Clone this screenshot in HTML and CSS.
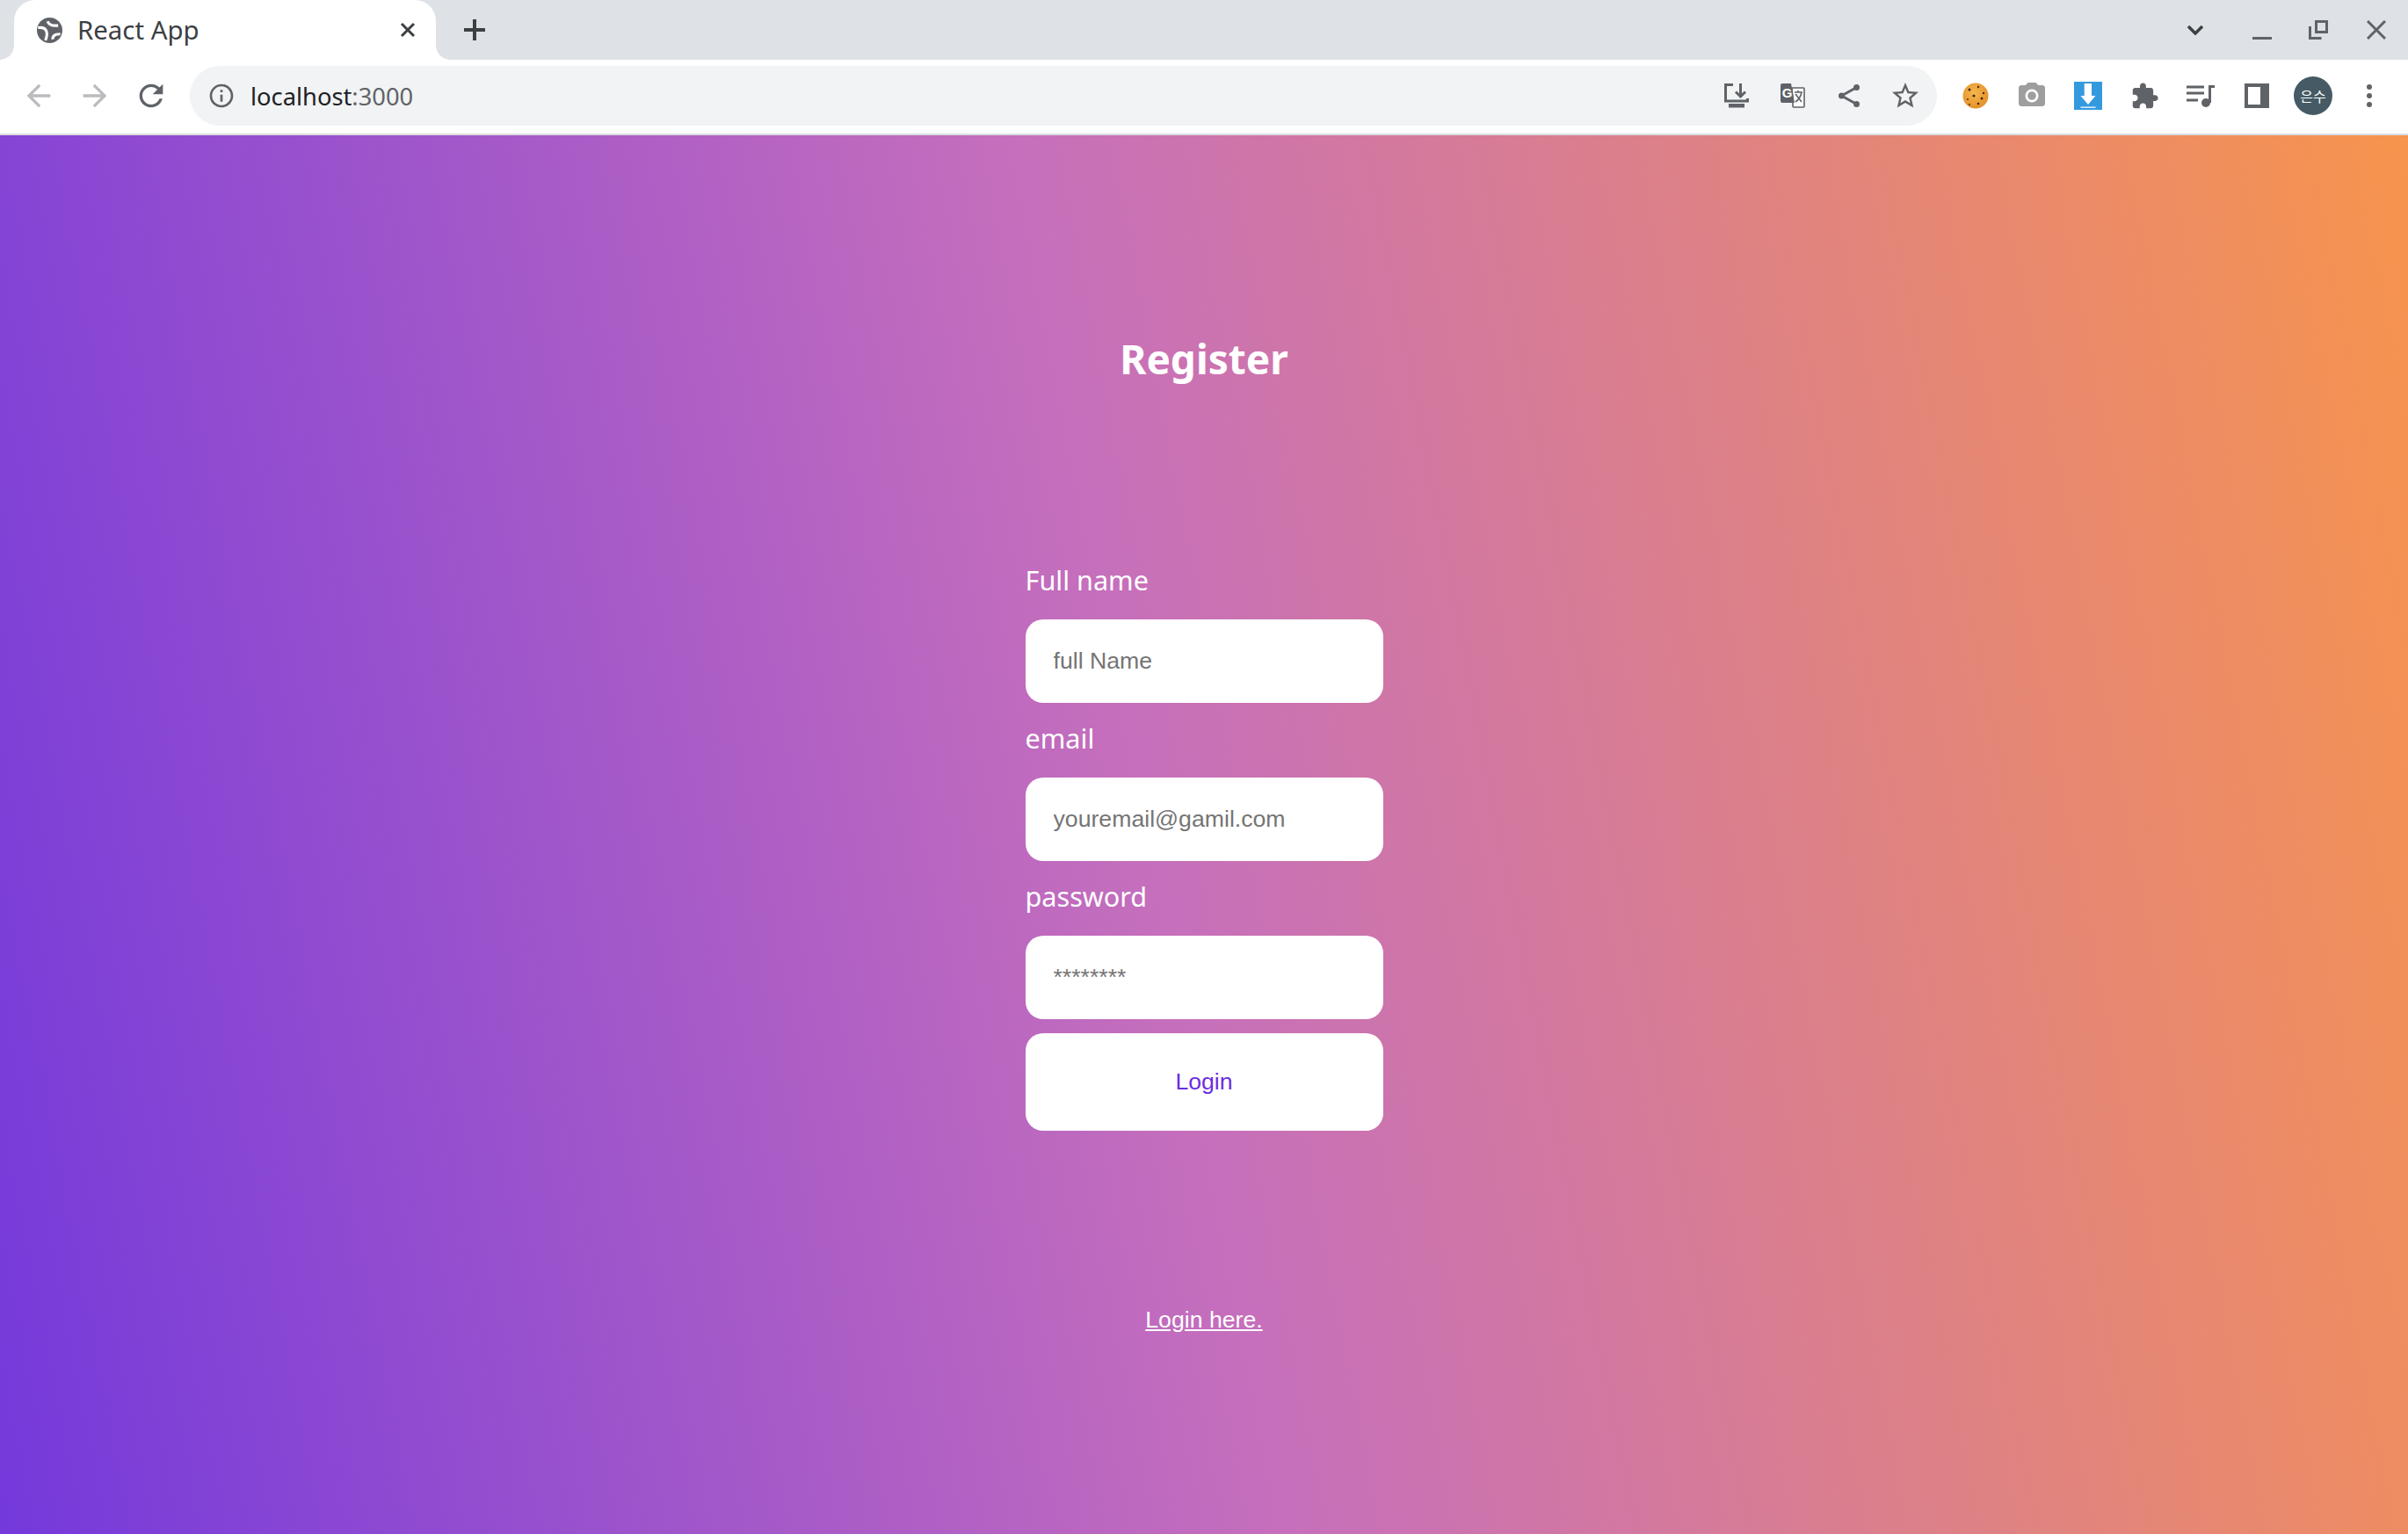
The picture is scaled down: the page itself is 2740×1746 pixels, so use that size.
FILE: index.html
```html
<!DOCTYPE html>
<html lang="en">
<head>
  <meta charset="UTF-8">
  <meta name="viewport" content="width=device-width, initial-scale=1.0">
  <title>React App</title>
  <link rel="stylesheet" href="styles.css">
</head>
<body>
  <!-- browser chrome -->
  <div class="tab-strip">
    <div class="tab">
      <svg class="favicon" viewBox="0 0 24 24">
        <circle cx="12" cy="12" r="12"/>
        <path class="swirl" d="M1 9.500c4-.5 7 .5 8 3.500s.5 5-1 8.500M10 3.500c1 3 4 4.500 10 4M15 20.500c-.5-3 1.500-5 7-5"/>
      </svg>
      <span class="tab-title">React App</span>
      <svg class="tab-close" viewBox="0 0 18 18"><path d="M2 2l14 14M16 2L2 16"/></svg>
    </div>
    <div class="new-tab">
      <svg class="plus" viewBox="0 0 24 24"><path d="M12 0v24M0 12h24"/></svg>
    </div>
    <div class="strip-space"></div>
    <div class="win-btn tab-search">
      <svg class="chevron" viewBox="0 0 20 12"><path d="M2 2l8 8 8-8"/></svg>
    </div>
    <div class="win-btn">
      <svg class="win-ico" viewBox="0 0 22 22"><path d="M0 20.500h22"/></svg>
    </div>
    <div class="win-btn">
      <svg class="win-ico" viewBox="0 0 22 22"><path d="M8.500 1.500h12v12h-12zM1.500 7v13.500h13"/></svg>
    </div>
    <div class="win-btn win-close">
      <svg class="win-ico" viewBox="0 0 22 22"><path d="M1 1l20 20M21 1L1 21"/></svg>
    </div>
  </div>

  <div class="toolbar">
    <div class="tool">
      <svg class="ico-40 off" viewBox="0 0 24 24"><path d="M20 11H7.830l5.590-5.590L12 4l-8 8 8 8 1.410-1.410L7.830 13H20v-2z"/></svg>
    </div>
    <div class="tool">
      <svg class="ico-40 off" viewBox="0 0 24 24"><path d="M12 4l-1.410 1.410L16.170 11H4v2h12.170l-5.580 5.590L12 20l8-8z"/></svg>
    </div>
    <div class="tool">
      <svg class="ico-40" viewBox="0 0 24 24"><path d="M17.650 6.350C16.200 4.900 14.210 4 12 4c-4.420 0-7.990 3.580-7.990 8s3.570 8 7.990 8c3.730 0 6.840-2.550 7.730-6h-2.080c-.82 2.330-3.040 4-5.650 4-3.310 0-6-2.690-6-6s2.690-6 6-6c1.660 0 3.140.69 4.220 1.780L13 11h7V4l-2.350 2.350z"/></svg>
    </div>

    <div class="omnibox">
      <svg class="info" viewBox="0 0 24 24"><path d="M11 7h2v2h-2zm0 4h2v6h-2zm1-9C6.480 2 2 6.480 2 12s4.480 10 10 10 10-4.480 10-10S17.520 2 12 2zm0 18c-4.410 0-8-3.590-8-8s3.590-8 8-8 8 3.590 8 8-3.590 8-8 8z"/></svg>
      <div class="url">localhost<span class="url-port">:3000</span></div>
      <div class="tool">
        <svg class="ico-28" viewBox="0 0 28 28">
          <path class="line" d="M10 1.500H1.500V20h25v-3"/>
          <rect x="5" y="23" width="18" height="4.500"/>
          <path class="line" d="M18.500 0v14M13 9.500l5.500 5.500L24 9.500"/>
        </svg>
      </div>
      <div class="tool">
        <svg class="ico-28" viewBox="0 0 28 28">
          <path class="doc" d="M13 5h13a1 1 0 0 1 1 1v20a1 1 0 0 1-1 1H15a1 1 0 0 1-1-1v-6z"/>
          <path d="M2 0h10l4 22H2a2 2 0 0 1-2-2V2a2 2 0 0 1 2-2z"/>
          <text class="g-text" x="7.500" y="16">G</text>
          <path class="line-thin" d="M16 10h9M20 8v2M24 10c-1 5-4 9-7 11M17 12l7 9"/>
        </svg>
      </div>
      <div class="tool">
        <svg class="ico-share" viewBox="0 0 24 26">
          <circle cx="20.500" cy="3.500" r="3.500"/>
          <circle cx="3.500" cy="13" r="3.500"/>
          <circle cx="20.500" cy="22.500" r="3.500"/>
          <path class="line" d="M20.500 3.500L3.500 13l17 9.500"/>
        </svg>
      </div>
      <div class="tool">
        <svg class="ico-36" viewBox="0 0 24 24"><path d="M22 9.240l-7.190-.62L12 2 9.190 8.630 2 9.240l5.460 4.730L5.820 21 12 17.270 18.180 21l-1.630-7.030L22 9.240zM12 15.400l-3.760 2.270 1-4.280-3.320-2.880 4.380-.38L12 6.100l1.710 4.040 4.380.38-3.320 2.880 1 4.280L12 15.400z"/></svg>
      </div>
    </div>

    <div class="tool">
      <svg class="ico-30" viewBox="0 0 30 30">
        <defs>
          <radialGradient id="cookieFill" cx="45%" cy="40%" r="60%">
            <stop offset="0" stop-color="#f6b84e"/>
            <stop offset="1" stop-color="#e4902a"/>
          </radialGradient>
        </defs>
        <circle class="cookie" cx="15" cy="15" r="14.500"/>
        <g class="chip">
          <circle cx="8" cy="8" r="1.500"/>
          <circle cx="18" cy="5" r="1.200"/>
          <circle cx="24" cy="12" r="1.200"/>
          <circle cx="13" cy="15" r="1.600"/>
          <circle cx="6" cy="19" r="1"/>
          <circle cx="22" cy="18" r="1.500"/>
          <circle cx="18" cy="24" r="1.300"/>
          <circle cx="8" cy="25" r="1"/>
        </g>
      </svg>
    </div>
    <div class="tool">
      <svg class="ico-36 dim" viewBox="0 0 24 24">
        <path d="M9 2L7.170 4H4c-1.100 0-2 .9-2 2v12c0 1.100.9 2 2 2h16c1.100 0 2-.9 2-2V6c0-1.100-.9-2-2-2h-3.170L15 2H9zm3 15a5 5 0 1 1 0-10 5 5 0 0 1 0 10z"/>
        <circle cx="12" cy="12" r="3.200"/>
      </svg>
    </div>
    <div class="tool">
      <svg class="ico-32" viewBox="0 0 32 32">
        <rect class="dl-bg" width="32" height="32"/>
        <path class="dl-arrow" d="M11.700 2H20v14h4.500L16 26 7.500 16h4.200zM7.500 28.500h17v1.300h-17z"/>
      </svg>
    </div>
    <div class="tool">
      <svg class="ico-33" viewBox="0 0 24 24"><path d="M20.500 11H19V7c0-1.100-.9-2-2-2h-4V3.500C13 2.120 11.880 1 10.500 1S8 2.120 8 3.500V5H4c-1.100 0-1.990.9-1.990 2v3.800H3.500c1.490 0 2.700 1.210 2.700 2.700s-1.210 2.700-2.700 2.700H2V20c0 1.100.9 2 2 2h3.800v-1.500c0-1.490 1.210-2.700 2.700-2.700 1.490 0 2.700 1.210 2.700 2.700V22H17c1.100 0 2-.9 2-2v-4h1.500c1.380 0 2.500-1.120 2.500-2.500S21.880 11 20.500 11z"/></svg>
    </div>
    <div class="tool">
      <svg class="ico-media" viewBox="0 0 32 26">
        <path class="line" d="M0 3h20M0 10h20M0 18h13M26.500 21V2.500H32"/>
        <circle cx="22" cy="21" r="5"/>
      </svg>
    </div>
    <div class="tool">
      <svg class="ico-28" viewBox="0 0 28 28">
        <path d="M0 0h28v28H0zM4 4v20h14V4z" fill-rule="evenodd"/>
      </svg>
    </div>
    <div class="tool">
      <div class="avatar">은수</div>
    </div>
    <div class="tool">
      <div class="dots"><i></i><i></i><i></i></div>
    </div>
  </div>

  <!-- page -->
  <main class="page">
    <h1 class="page-title">Register</h1>
    <form class="auth-form">
      <label class="field-label" for="name">Full name</label>
      <input class="field-input" id="name" type="text" placeholder="full Name">
      <label class="field-label" for="email">email</label>
      <input class="field-input" id="email" type="email" placeholder="youremail@gamil.com">
      <label class="field-label" for="password">password</label>
      <input class="field-input" id="password" type="password" placeholder="********">
      <button class="submit-btn" type="button">Login</button>
    </form>
    <a class="switch-link" href="#">Login here.</a>
  </main>
</body>
</html>
```

FILE: styles.css
```css
:root {
  --strip-bg: #dee1e6;
  --icon: #5f6368;
  --omni-bg: #f1f3f4;
  --chrome-font: 'Noto Sans', sans-serif;
}

* {
  box-sizing: border-box;
}

html, body {
  height: 100%;
}

body {
  margin: 0;
  display: flex;
  flex-direction: column;
  font-family: 'Liberation Sans', sans-serif;
  overflow: hidden;
}

svg {
  display: block;
  fill: var(--icon);
}

.line {
  fill: none;
  stroke: var(--icon);
  stroke-width: 3;
}

.line-thin {
  fill: none;
  stroke: var(--icon);
  stroke-width: 1.6;
}

/* Tab strip */
.tab-strip {
  display: flex;
  align-items: center;
  height: 68px;
  flex: none;
  background: var(--strip-bg);
  padding: 0 4px 0 16px;
}

.tab {
  position: relative;
  display: flex;
  align-items: center;
  width: 480px;
  height: 68px;
  padding: 0 23px 0 26px;
  background: #fff;
  border-radius: 24px 24px 0 0;
}

.tab::before,
.tab::after {
  content: "";
  position: absolute;
  bottom: 0;
  width: 16px;
  height: 16px;
}

.tab::before {
  left: -16px;
  background: radial-gradient(circle at 0 0, transparent 15.5px, #fff 16px);
}

.tab::after {
  right: -16px;
  background: radial-gradient(circle at 100% 0, transparent 15.5px, #fff 16px);
}

.favicon {
  width: 29px;
  height: 29px;
  flex: none;
}

.swirl {
  fill: none;
  stroke: #fff;
  stroke-width: 2.6;
}

.tab-title {
  margin-left: 17px;
  flex: 1;
  font-family: var(--chrome-font);
  font-size: 29.4px;
  color: #3c4043;
}

.tab-close {
  width: 18px;
  height: 18px;
  fill: none;
  stroke: #3c4043;
  stroke-width: 3;
}

.new-tab {
  margin-left: 32px;
}

.plus {
  width: 24px;
  height: 24px;
  fill: none;
  stroke: #3c4043;
  stroke-width: 4;
}

.strip-space {
  flex: 1;
}

.win-btn {
  display: flex;
  align-items: center;
  justify-content: center;
  width: 64px;
  height: 68px;
}

.tab-search {
  margin-right: 12px;
}

.win-close {
  margin-left: 2px;
}

.chevron {
  width: 20px;
  height: 12px;
  fill: none;
  stroke: #3c4043;
  stroke-width: 3.5;
}

.win-ico {
  width: 22px;
  height: 22px;
  fill: none;
  stroke: var(--icon);
  stroke-width: 3;
}

/* Toolbar */
.toolbar {
  display: flex;
  align-items: center;
  flex: none;
  height: 86px;
  padding: 0 12px 2px;
  background: #fff;
  border-bottom: 2px solid #dadce0;
}

.tool {
  display: flex;
  align-items: center;
  justify-content: center;
  flex: none;
  width: 64px;
  height: 64px;
}

.off {
  fill: #b9bbbe;
}

.ico-40 { width: 40px; height: 40px; }
.ico-36 { width: 36px; height: 36px; }
.ico-33 { width: 33px; height: 33px; }
.ico-32 { width: 32px; height: 32px; }
.ico-30 { width: 30px; height: 30px; }
.ico-28 { width: 28px; height: 28px; }
.ico-share { width: 24px; height: 26px; }
.ico-media { width: 32px; height: 26px; }

.dim {
  fill: #9e9e9e;
}

.omnibox {
  display: flex;
  align-items: center;
  flex: 1;
  height: 68px;
  margin: 0 12px;
  padding: 0 4px 0 20px;
  border-radius: 34px;
  background: var(--omni-bg);
}

.info {
  width: 32px;
  height: 32px;
  flex: none;
}

.url {
  flex: 1;
  margin-left: 17px;
  font-family: var(--chrome-font);
  font-size: 27.3px;
  color: #202124;
}

.url-port {
  color: var(--icon);
}

.doc {
  fill: #fff;
  stroke: var(--icon);
  stroke-width: 1.6;
}

.g-text {
  font-family: 'Liberation Sans', sans-serif;
  font-size: 15px;
  font-weight: 700;
  fill: #fff;
  text-anchor: middle;
}

.cookie {
  fill: url(#cookieFill);
}

.chip {
  fill: #4a2c12;
}

.dl-bg {
  fill: #349ade;
}

.dl-arrow {
  fill: #fff;
}

.avatar {
  display: flex;
  align-items: center;
  justify-content: center;
  width: 44px;
  height: 44px;
  border-radius: 50%;
  background: #455a64;
  color: #fff;
  font-family: 'Noto Sans CJK KR', sans-serif;
  font-size: 16px;
}

.dots {
  display: flex;
  flex-direction: column;
  gap: 4px;
}

.dots i {
  display: block;
  width: 6px;
  height: 6px;
  border-radius: 50%;
  background: var(--icon);
}

/* Page */
.page {
  flex: 1;
  display: flex;
  flex-direction: column;
  align-items: center;
  padding-top: 226px;
  background: linear-gradient(79deg, #7439db, #c66fbc 48%, #f7944d);
  color: #fff;
}

.page-title {
  margin: 0;
  height: 56px;
  font-family: 'Noto Sans', sans-serif;
  font-size: 46px;
  line-height: 56px;
  font-weight: 700;
}

.auth-form {
  display: flex;
  flex-direction: column;
  width: 407px;
  margin-top: 204px;
}

.field-label {
  height: 65px;
  line-height: 41px;
  font-family: 'Noto Sans', sans-serif;
  font-size: 30.6px;
}

.field-input {
  height: 95px;
  padding: 0 32px;
  margin-bottom: 20px;
  border: 0;
  border-radius: 20px;
  background: #fff;
  font-family: 'Liberation Sans', sans-serif;
  font-size: 26.67px;
}

.field-input::placeholder {
  color: #757575;
}

.submit-btn {
  height: 111px;
  margin-top: -4px;
  border: 0;
  border-radius: 20px;
  background: #fff;
  color: #6b2ee0;
  font-family: 'Liberation Sans', sans-serif;
  font-size: 26.67px;
}

.switch-link {
  margin-top: 200px;
  color: #fff;
  font-size: 26.67px;
}
```
